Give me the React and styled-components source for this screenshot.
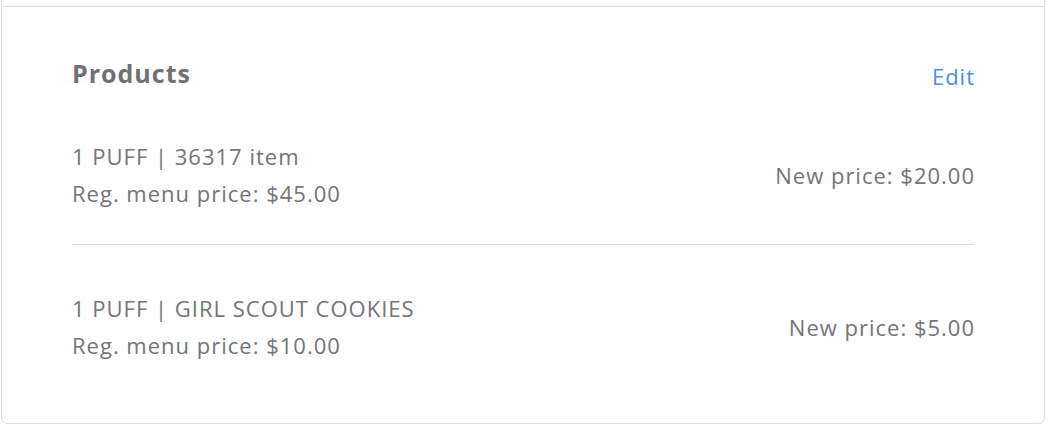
import React from "react";
import styled, { createGlobalStyle } from "styled-components";

const GlobalStyle = createGlobalStyle`
  body {
    margin: 0;
    background: #ffffff;
    font-family: "Open Sans", "Liberation Sans", sans-serif;
  }
`;

const Page = styled.div`
  width: 1050px;
  height: 426px;
  overflow: hidden;
  padding-left: 1px;
  box-sizing: border-box;
`;

const PrevCard = styled.div`
  width: 1044px;
  height: 6px;
  box-sizing: border-box;
  border-left: 1px solid #dcdce0;
  border-right: 1px solid #dcdce0;
`;

const Card = styled.div`
  width: 1044px;
  box-sizing: border-box;
  border: 1px solid #dcdce0;
  border-radius: 0 0 6px 6px;
  padding: 48px 70px 59px 70px;
`;

const Header = styled.div`
  display: flex;
  justify-content: space-between;
  align-items: center;
`;

const Title = styled.h2`
  margin: 0;
  font-size: 25px;
  line-height: 30px;
  font-weight: 700;
  letter-spacing: 1px;
  color: #707074;
`;

const EditLink = styled.a`
  font-size: 22px;
  line-height: 30px;
  letter-spacing: 1px;
  margin-right: -1px;
  padding-top: 6px;
  color: #4a90e2;
  text-decoration: none;
  cursor: pointer;
`;

const Row = styled.div`
  display: flex;
  justify-content: space-between;
  align-items: center;
  padding: ${(p) => (p.first ? "47px 0 32px" : "45px 0 0")};
  border-top: ${(p) => (p.first ? "none" : "1px solid #dcdce0")};
`;

const Info = styled.div`
  display: flex;
  flex-direction: column;
`;

const Line = styled.span`
  font-size: 22px;
  line-height: 37px;
  letter-spacing: 1px;
  color: #747478;
`;

const NewPrice = styled.span`
  font-size: 22px;
  line-height: 37px;
  letter-spacing: 1px;
  margin-right: -1px;
  color: #747478;
`;

const products = [
  { name: "1 PUFF | 36317 item", reg: "$45.00", price: "$20.00" },
  { name: "1 PUFF | GIRL SCOUT COOKIES", reg: "$10.00", price: "$5.00" },
];

export default function App() {
  return (
    <Page>
      <GlobalStyle />
      <PrevCard />
      <Card>
        <Header>
          <Title>Products</Title>
          <EditLink>Edit</EditLink>
        </Header>
        {products.map((p, i) => (
          <Row key={p.name} first={i === 0}>
            <Info>
              <Line>{p.name}</Line>
              <Line>Reg. menu price: {p.reg}</Line>
            </Info>
            <NewPrice>New price: {p.price}</NewPrice>
          </Row>
        ))}
      </Card>
    </Page>
  );
}
